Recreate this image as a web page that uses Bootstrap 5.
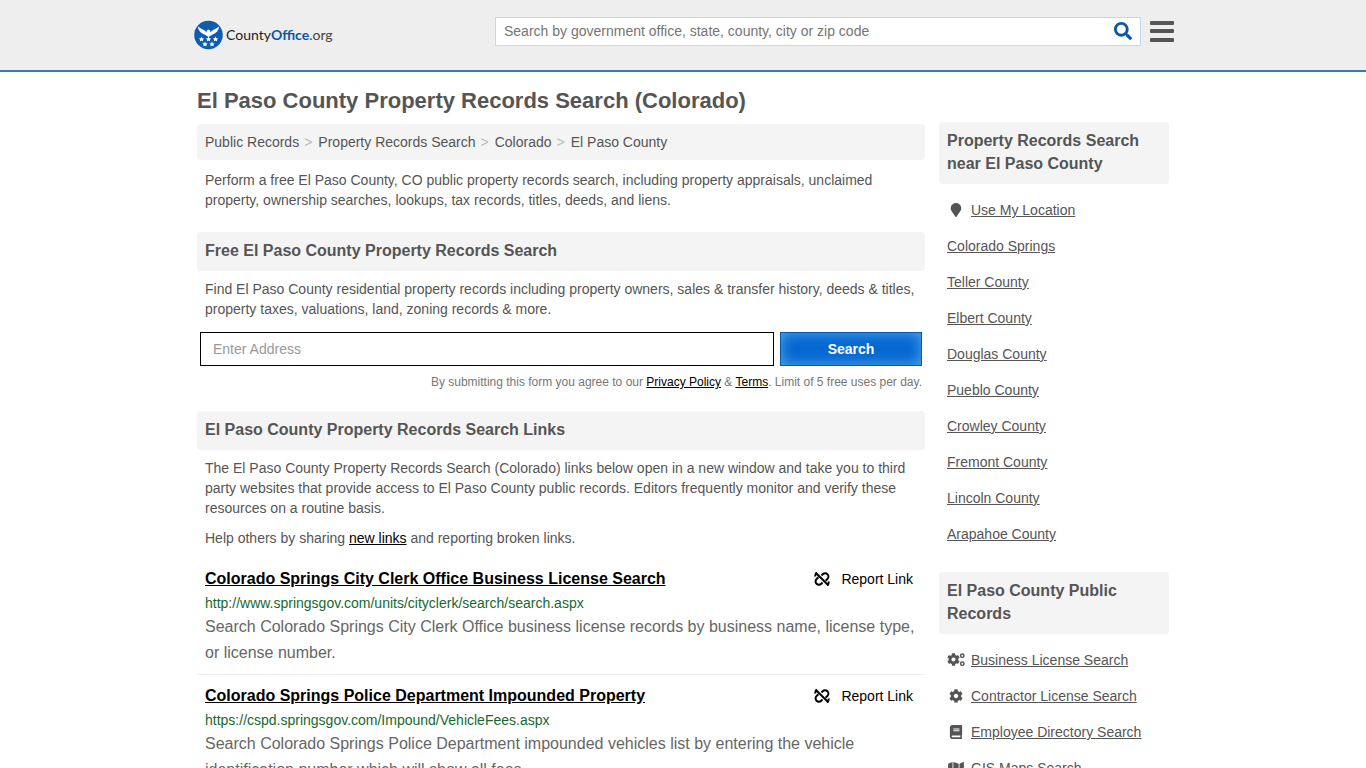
<!DOCTYPE html>
<html lang="en">
<head>
<meta charset="utf-8">
<meta name="viewport" content="width=device-width, initial-scale=1">
<title>El Paso County Property Records Search (Colorado)</title>
<link href="https://cdn.jsdelivr.net/npm/bootstrap@5.3.0/dist/css/bootstrap.min.css" rel="stylesheet">
<style>
  body { font-family: "Liberation Sans", Arial, sans-serif; font-size: 14px; line-height: 20px; color: #555; background: #fff; }
  .site-header { background: #eee; border-bottom: 2px solid #337ab7; min-height: 72px; }
  .page-wrap { max-width: 980px; }
  .header-wrap { max-width: 982px; }
  .brand { font-family: Lato, "Liberation Sans", sans-serif; font-size: 14px; color: #222; gap: 3px; }
  .brand b { color: #0a55a8; font-weight: 700; }
  .brand .tld { color: #444; }
  .header-tools { flex: 0 1 679px; }
  .site-search { background: #fff; border: 1px solid #c3d9ea; height: 29px; }
  .site-search input { border: 0; padding: 0 8px; font-size: 14px; background: transparent; outline: 0; color: #555; min-width: 0; }
  .site-search input::placeholder { color: #757575; opacity: 1; }
  .icon-btn { border: 0; background: none; padding: 0; display: flex; }
  h1 { font-size: 22px; line-height: 24px; font-weight: 700; margin: 17px 0 11px; }
  .band { background: #f4f4f4; border-radius: 4px; padding: 8px; }
  h2.band { font-size: 16px; line-height: 23px; font-weight: 700; margin: 0; padding: 7px 8px 9px; }
  .crumbs { --bs-breadcrumb-divider: ">"; --bs-breadcrumb-divider-color: #bbb; --bs-breadcrumb-item-padding-x: 6px; font-size: 14px; margin: 0; }
  .crumbs .breadcrumb-item + .breadcrumb-item { padding-left: 5px; }
  .crumbs a { color: #555; text-decoration: none; }
  .copy { padding: 0 8px; margin: 0 0 10px; }
  .intro { margin: 10px 0 22px; }
  .columns { column-gap: 14px; }
  .main-col { flex: 1 1 0; min-width: 0; }
  .side-col { width: 230px; flex: none; margin-top: 50px; }
  .addr-form { padding: 0 3px; margin: 13px 0 21px; }
  .addr-row { gap: 6px; }
  .addr { height: 34px; border: 1px solid #000; padding: 0 12px; font-size: 14px; color: #555; min-width: 0; }
  .addr::placeholder { color: #999; opacity: 1; }
  .go { width: 142px; height: 34px; border: 1px solid #0a58a8; border-radius: 0; background: #0468d0; box-shadow: inset 0 0 14px #5aa5ea; color: #fff; font-size: 14px; font-weight: 700; padding: 0; }
  .fine { font-size: 12px; line-height: 16px; color: #777; text-align: right; }
  .fine a, .copy a { color: #000; }
  .result { padding: 8px; border-bottom: 1px solid #eee; }
  .result h3 { font-size: 16px; line-height: 26px; font-weight: 700; margin: 0; }
  .result h3 a { color: #000; }
  .result .url { color: #15692f; line-height: 22px; }
  .result p { font-size: 16px; line-height: 26px; color: #666; margin: 0; }
  .report { color: #000; text-decoration: none; gap: 11px; }
  .side-links { margin: 8px 0 20px; padding: 0 8px; }
  .side-links li { height: 36px; display: flex; align-items: center; gap: 6px; }
  .side-links a { color: #555; }
  .side-links svg { width: 18px; height: 14px; fill: #555; flex: none; }
</style>
</head>
<body>
<svg class="d-none" aria-hidden="true">
  <symbol id="cog" viewBox="0 0 512 512"><path d="M487.4 315.7l-42.6-24.6c4.3-23.2 4.3-47 0-70.2l42.6-24.6c4.9-2.8 7.1-8.6 5.5-14-11.1-35.6-30-67.8-54.7-94.6-3.8-4.1-10-5.1-14.8-2.3L380.8 110c-17.9-15.4-38.5-27.3-60.8-35.1V25.8c0-5.6-3.9-10.5-9.4-11.7-36.7-8.2-74.3-7.8-109.2 0-5.5 1.2-9.4 6.1-9.4 11.7V75c-22.2 7.9-42.8 19.8-60.8 35.1L88.7 85.5c-4.9-2.8-11-1.9-14.8 2.3-24.7 26.7-43.6 58.9-54.7 94.6-1.7 5.4.6 11.2 5.5 14L67.3 221c-4.3 23.2-4.3 47 0 70.2l-42.6 24.6c-4.9 2.8-7.1 8.6-5.5 14 11.1 35.6 30 67.8 54.7 94.6 3.8 4.1 10 5.1 14.8 2.3l42.6-24.6c17.9 15.4 38.5 27.3 60.8 35.1v49.2c0 5.6 3.9 10.5 9.4 11.7 36.7 8.2 74.3 7.8 109.2 0 5.5-1.2 9.4-6.1 9.4-11.7v-49.2c22.2-7.9 42.8-19.8 60.8-35.1l42.6 24.6c4.9 2.8 11 1.9 14.8-2.3 24.7-26.7 43.6-58.9 54.7-94.6 1.5-5.5-.7-11.3-5.6-14.1zM256 336c-44.1 0-80-35.9-80-80s35.9-80 80-80 80 35.9 80 80-35.9 80-80 80z"/></symbol>
  <symbol id="broken" viewBox="0 0 16 16"><g fill="none" stroke="#000" stroke-width="2"><path d="M1.500 1.500l13 13"/><path d="M7.500 4.500l1.200-1.200a3.300 3.300 0 0 1 4.800 4.600L11.600 9.800M8.500 11.500l-1.200 1.200a3.300 3.300 0 0 1-4.800-4.600L4.400 6.200M1.500 5.500a3 3 0 0 1 1.500-3.500M14.500 10.500a3 3 0 0 1-1.500 3.500"/></g></symbol>
</svg>

<header class="site-header d-flex align-items-center">
  <div class="header-wrap container-fluid px-0 d-flex align-items-center justify-content-between">
    <a href="#" class="brand d-flex align-items-center text-decoration-none">
      <svg width="31" height="30" viewBox="-1 0 31 30" aria-hidden="true">
        <circle cx="15.500" cy="15" r="14.300" fill="#0f5cae"/>
        <g fill="#fff">
          <path d="M5 6.500c2.500 2.500 6 2.500 8.500 6l.3-2 1.700-1 1.700 1 .3 2c2.500-3.500 6-3.500 8.500-6-.2 4.500-3 6.500-6.500 8l-4 2.500-4-2.500C8 13 5.200 11 5 6.500z"/>
          <path id="st" d="M8.500 16.500l.8 1.700 1.900.2-1.400 1.300.4 1.900-1.700-1-1.700 1 .4-1.900-1.400-1.300 1.900-.2z"/>
          <use href="#st" x="7"/><use href="#st" x="14"/><use href="#st" x="3.500" y="5"/><use href="#st" x="10.500" y="5"/>
        </g>
      </svg>
      <span>County<b>Office</b><span class="tld">.org</span></span>
    </a>
    <div class="header-tools d-flex align-items-center pb-2">
      <form class="site-search flex-grow-1 d-flex align-items-center">
        <input type="text" class="flex-grow-1" aria-label="Search" placeholder="Search by government office, state, county, city or zip code">
        <button type="button" class="icon-btn me-2" aria-label="Search"><svg width="18" height="18" viewBox="0 0 512 512"><path fill="#0f55a5" d="M505 442.700L405.300 343c-4.500-4.500-10.600-7-17-7H372c27.600-35.300 44-79.700 44-128C416 93.100 322.900 0 208 0S0 93.100 0 208s93.100 208 208 208c48.300 0 92.700-16.400 128-44v16.300c0 6.400 2.500 12.500 7 17l99.700 99.700c9.400 9.400 24.600 9.400 33.900 0l28.300-28.300c9.400-9.400 9.400-24.600.1-34zM208 336c-70.700 0-128-57.200-128-128 0-70.700 57.200-128 128-128 70.700 0 128 57.200 128 128 0 70.700-57.200 128-128 128z"/></svg></button>
      </form>
      <button type="button" class="icon-btn ms-2" aria-label="Menu"><svg width="25" height="23" viewBox="0 0 25 23" fill="#555"><rect x="1" y="1" width="24" height="4" rx="1"/><rect x="1" y="9" width="24" height="4" rx="1"/><rect x="1" y="18" width="24" height="4" rx="1"/></svg></button>
    </div>
  </div>
</header>

<div class="page-wrap columns container-fluid px-1 d-flex flex-wrap flex-md-nowrap">
  <main class="main-col">
    <h1>El Paso County Property Records Search (Colorado)</h1>
    <nav class="band" aria-label="Breadcrumb">
      <ol class="breadcrumb crumbs">
        <li class="breadcrumb-item"><a href="#">Public Records</a></li>
        <li class="breadcrumb-item"><a href="#">Property Records Search</a></li>
        <li class="breadcrumb-item"><a href="#">Colorado</a></li>
        <li class="breadcrumb-item"><a href="#">El Paso County</a></li>
      </ol>
    </nav>
    <p class="copy intro">Perform a free El Paso County, CO public property records search, including property appraisals, unclaimed property, ownership searches, lookups, tax records, titles, deeds, and liens.</p>

    <h2 class="band">Free El Paso County Property Records Search</h2>
    <p class="copy mt-2">Find El Paso County residential property records including property owners, sales &amp; transfer history, deeds &amp; titles, property taxes, valuations, land, zoning records &amp; more.</p>
    <form class="addr-form">
      <div class="d-flex addr-row">
        <input type="text" class="addr flex-grow-1" aria-label="Address" placeholder="Enter Address">
        <button type="button" class="go btn">Search</button>
      </div>
      <div class="fine mt-2">By submitting this form you agree to our <a href="#">Privacy Policy</a> &amp; <a href="#">Terms</a>. Limit of 5 free uses per day.</div>
    </form>

    <h2 class="band">El Paso County Property Records Search Links</h2>
    <p class="copy mt-2">The El Paso County Property Records Search (Colorado) links below open in a new window and take you to third party websites that provide access to El Paso County public records. Editors frequently monitor and verify these resources on a routine basis.</p>
    <p class="copy">Help others by sharing <a href="#">new links</a> and reporting broken links.</p>

    <article class="result">
      <div class="d-flex justify-content-between align-items-center pe-1">
        <h3><a href="#">Colorado Springs City Clerk Office Business License Search</a></h3>
        <a href="#" class="report d-flex align-items-center"><svg width="16" height="16" aria-hidden="true"><use href="#broken"/></svg>Report Link</a>
      </div>
      <div class="url">http://www.springsgov.com/units/cityclerk/search/search.aspx</div>
      <p>Search Colorado Springs City Clerk Office business license records by business name, license type, or license number.</p>
    </article>
    <article class="result">
      <div class="d-flex justify-content-between align-items-center pe-1">
        <h3><a href="#">Colorado Springs Police Department Impounded Property</a></h3>
        <a href="#" class="report d-flex align-items-center"><svg width="16" height="16" aria-hidden="true"><use href="#broken"/></svg>Report Link</a>
      </div>
      <div class="url">https://cspd.springsgov.com/Impound/VehicleFees.aspx</div>
      <p>Search Colorado Springs Police Department impounded vehicles list by entering the vehicle identification number which will show all fees.</p>
    </article>
  </main>

  <aside class="side-col">
    <h2 class="band">Property Records Search near El Paso County</h2>
    <ul class="side-links list-unstyled">
      <li><svg viewBox="0 0 384 512" aria-hidden="true"><path d="M172.268 501.670C26.970 291.031 0 269.413 0 192 0 85.961 85.961 0 192 0s192 85.961 192 192c0 77.413-26.970 99.031-172.268 309.670-9.535 13.774-29.930 13.773-39.464 0z"/></svg><a href="#">Use My Location</a></li>
      <li><a href="#">Colorado Springs</a></li>
      <li><a href="#">Teller County</a></li>
      <li><a href="#">Elbert County</a></li>
      <li><a href="#">Douglas County</a></li>
      <li><a href="#">Pueblo County</a></li>
      <li><a href="#">Crowley County</a></li>
      <li><a href="#">Fremont County</a></li>
      <li><a href="#">Lincoln County</a></li>
      <li><a href="#">Arapahoe County</a></li>
    </ul>
    <h2 class="band">El Paso County Public Records</h2>
    <ul class="side-links list-unstyled">
      <li><svg viewBox="0 0 18 14" aria-hidden="true"><use href="#cog" x="0" y="0" width="13" height="13"/><g fill="none" stroke="#555" stroke-width="1.500"><circle cx="15.300" cy="2.800" r="1.700"/><circle cx="15.300" cy="10.800" r="1.700"/></g></svg><a href="#">Business License Search</a></li>
      <li><svg viewBox="0 0 512 512" aria-hidden="true"><use href="#cog"/></svg><a href="#">Contractor License Search</a></li>
      <li><svg viewBox="0 0 448 512" aria-hidden="true"><path d="M448 360V24c0-13.300-10.700-24-24-24H96C43 0 0 43 0 96v320c0 53 43 96 96 96h328c13.300 0 24-10.700 24-24v-16c0-7.500-3.500-14.300-8.900-18.700-4.200-15.400-4.200-59.300 0-74.700 5.400-4.300 8.900-11.100 8.900-18.600zM128 134c0-3.300 2.700-6 6-6h212c3.300 0 6 2.700 6 6v20c0 3.300-2.700 6-6 6H134c-3.300 0-6-2.700-6-6v-20zm0 64c0-3.300 2.700-6 6-6h212c3.300 0 6 2.700 6 6v20c0 3.300-2.700 6-6 6H134c-3.300 0-6-2.700-6-6v-20zm253.400 250H96c-17.700 0-32-14.300-32-32 0-17.600 14.400-32 32-32h285.400c-1.900 17.100-1.900 46.900 0 64z"/></svg><a href="#">Employee Directory Search</a></li>
      <li><svg viewBox="0 0 576 512" aria-hidden="true"><path d="M0 117.660v346.320c0 11.320 11.430 19.060 21.940 14.860L160 416V32L20.120 87.950A32.006 32.006 0 0 0 0 117.660zM192 416l192 64V96L192 32v384zM554.060 33.160L416 96v384l139.880-55.950A31.996 31.996 0 0 0 576 394.340V48.020c0-11.320-11.430-19.060-21.940-14.860z"/></svg><a href="#">GIS Maps Search</a></li>
    </ul>
  </aside>
</div>
<script src="https://cdn.jsdelivr.net/npm/bootstrap@5.3.0/dist/js/bootstrap.bundle.min.js"></script>
</body>
</html>
